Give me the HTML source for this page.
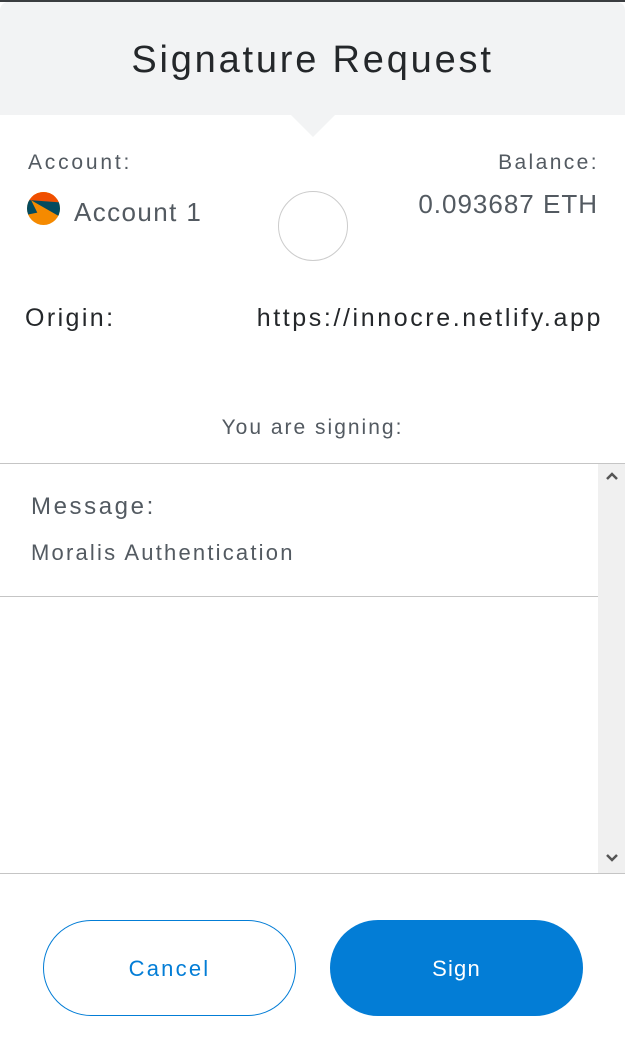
<!DOCTYPE html>
<html><head><style>
body{margin:0;width:625px;height:1059px;background:#fff;font-family:"Liberation Sans",sans-serif;position:relative;overflow:hidden;color:#24272a}
.a{position:absolute;white-space:nowrap}
</style></head><body>
<div class="a" style="left:0;top:0;width:625px;height:2px;background:#3a3d40"></div>
<div class="a" style="left:0;top:2px;width:625px;height:113px;background:#f2f3f4;border-radius:8px 8px 0 0"></div>
<div class="a" style="left:0;top:39px;width:625px;text-align:center;font-size:38px;letter-spacing:2.8px">Signature Request</div>
<div class="a" style="left:291px;top:115px;width:0;height:0;border-left:22px solid transparent;border-right:22px solid transparent;border-top:22px solid #f2f3f4"></div>
<div class="a" style="left:28px;top:151px;font-size:21px;color:#535a61;letter-spacing:2.8px">Account:</div>
<div class="a" style="right:26px;top:151px;font-size:21px;color:#535a61;letter-spacing:2.4px">Balance:</div>
<svg class="a" style="left:27px;top:192px" width="33" height="33" viewBox="0 0 32 32"><defs><clipPath id="c"><circle cx="16" cy="16" r="16"/></clipPath></defs><g clip-path="url(#c)"><rect width="32" height="32" fill="#f58a00"/><polygon points="0,0 32,0 32,2 0,2" fill="#f2b800"/><polygon points="4,0 32,0 32,10 0,8" fill="#f04f00"/><polygon points="4,8 32,10 32,24" fill="#034b5f"/><polygon points="0,8 4,8 10,20 0,22" fill="#034b5f"/></g></svg>
<div class="a" style="left:74px;top:197px;font-size:26px;color:#535a61;letter-spacing:1.4px">Account 1</div>
<div class="a" style="right:27px;top:189px;font-size:26px;color:#535a61;letter-spacing:1px">0.093687 ETH</div>
<div class="a" style="left:278px;top:191px;width:68px;height:68px;border:1px solid #ccc;border-radius:50%"></div>
<div class="a" style="left:25px;top:304px;font-size:25px;letter-spacing:2.4px">Origin:</div>
<div class="a" style="right:22px;top:304px;font-size:25px;letter-spacing:2.6px">https://innocre.netlify.app</div>
<div class="a" style="left:0;top:416px;width:625px;text-align:center;font-size:21px;color:#535a61;letter-spacing:2px">You are signing:</div>
<div class="a" style="left:0;top:463px;width:625px;height:1px;background:#c5c5c5"></div>
<div class="a" style="left:598px;top:464px;width:27px;height:409px;background:#f0f0f0"></div>
<svg class="a" style="left:604px;top:470px" width="16" height="12"><path d="M3 9 L8 4 L13 9" stroke="#555" stroke-width="2.5" fill="none"/></svg>
<svg class="a" style="left:604px;top:852px" width="16" height="12"><path d="M3 3 L8 8 L13 3" stroke="#555" stroke-width="2.5" fill="none"/></svg>
<div class="a" style="left:31px;top:493px;font-size:24px;color:#535a61;letter-spacing:2.6px">Message:</div>
<div class="a" style="left:31px;top:540px;font-size:22px;color:#535a61;letter-spacing:2.2px">Moralis Authentication</div>
<div class="a" style="left:0;top:596px;width:598px;height:1px;background:#c5c5c5"></div>
<div class="a" style="left:0;top:873px;width:625px;height:1px;background:#c5c5c5"></div>
<div class="a" style="left:43px;top:920px;width:251px;height:94px;border:1px solid #037dd6;border-radius:48px;color:#037dd6;font-size:22px;text-align:center;line-height:96px;letter-spacing:2.2px">Cancel</div>
<div class="a" style="left:330px;top:920px;width:253px;height:96px;background:#037dd6;border-radius:48px;color:#fff;font-size:22px;text-align:center;line-height:98px;letter-spacing:1.2px">Sign</div>
</body></html>
